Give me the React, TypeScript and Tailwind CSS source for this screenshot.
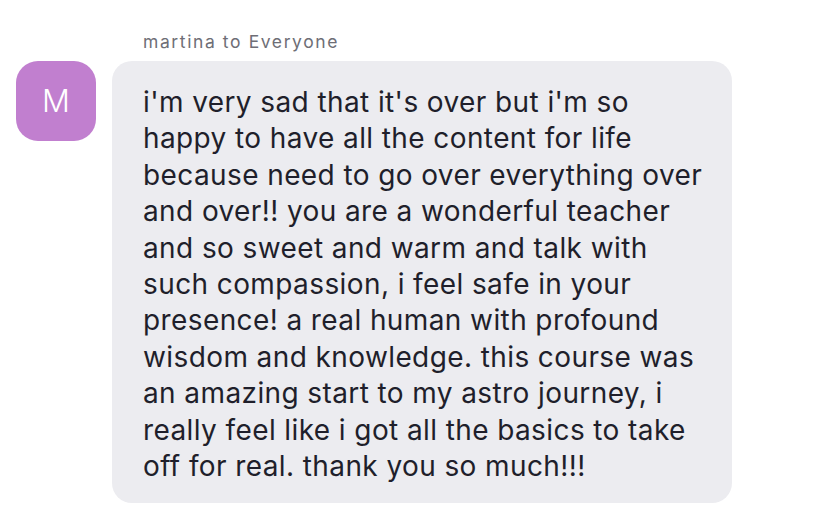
export default function App() {
  const lines = [
    "i'm very sad that it's over but i'm so",
    "happy to have all the content for life",
    "because need to go over everything over",
    "and over!! you are a wonderful teacher",
    "and so sweet and warm and talk with",
    "such compassion, i feel safe in your",
    "presence! a real human with profound",
    "wisdom and knowledge. this course was",
    "an amazing start to my astro journey, i",
    "really feel like i got all the basics to take",
    "off for real. thank you so much!!!",
  ];

  return (
    <div className="w-[828px] h-[527px] bg-white font-['Inter','Liberation_Sans',sans-serif] overflow-hidden">
      <div className="pt-[31px] pl-[143px] text-[17.5px] leading-[22px] tracking-[1.6px] text-[#6e6e76]">
        martina to Everyone
      </div>
      <div className="flex items-start gap-4 pl-4 mt-[8px]">
        {/* avatar */}
        <div className="w-20 h-20 shrink-0 rounded-[22px] bg-[#c17fcf] flex items-center justify-center text-white text-[31px] font-light">
          M
        </div>
        {/* bubble */}
        <div className="w-[620px] rounded-[20px] bg-[#ececf0] pl-[31px] pr-4 pt-[23px] pb-[19px] text-[28px] leading-[36.4px] tracking-[0.4px] text-[#1f1f2b]">
          {lines.map((l, i) => (
            <div key={i} className="whitespace-nowrap">
              {l}
            </div>
          ))}
        </div>
      </div>
    </div>
  );
}
